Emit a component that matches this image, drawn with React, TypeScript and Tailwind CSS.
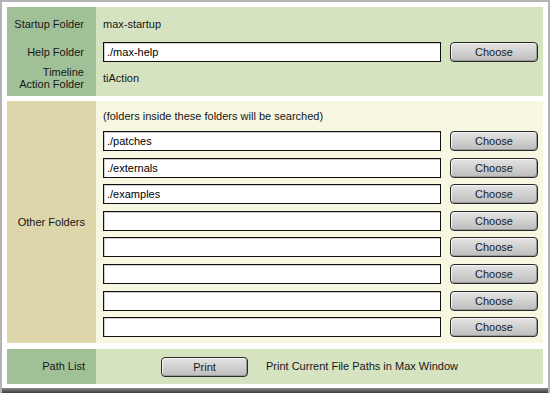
import React from "react"

const font = { fontFamily: '"Liberation Sans", Arial, sans-serif' }

function PathInput({ value = "" }: { value?: string }) {
  return (
    <div className="h-[20px] w-[338px] border border-[#111] bg-white px-[3px] text-[11px] leading-[18px] text-black shadow-[inset_1px_1px_0_#cfcfcf]">
      {value}
    </div>
  )
}

function MacButton({ label, width = "w-[88px]" }: { label: string; width?: string }) {
  return (
    <div
      className={`${width} h-[20px] rounded-[4px] border border-[#2a2a2a] bg-gradient-to-b from-[#e4e4e4] to-[#bdbdbd] text-center text-[11px] leading-[18px] text-[#1a1a1a] shadow-[inset_1px_1px_0_#f4f4f4,inset_-1px_-1px_0_#9a9a9a]`}
    >
      {label}
    </div>
  )
}

function FolderRow({ value }: { value?: string }) {
  return (
    <div className="flex h-[20px] items-center gap-[9px]">
      <PathInput value={value} />
      <MacButton label="Choose" />
    </div>
  )
}

export default function App() {
  const others = ["./patches", "./externals", "./examples", "", "", "", "", ""]

  return (
    <div className="h-[393px] w-[550px] overflow-hidden bg-[#b4b4b4] pl-[2px] pr-[2px] pt-[2px]" style={font}>
      <div className="flex h-[386px] flex-col bg-white px-[5px] pb-[4px] pt-[5px] text-[11px] text-[#161616]">
        {/* startup / help / timeline */}
        <div className="flex h-[89px]">
          <div className="flex w-[89px] flex-col bg-[#a0c197] pb-[6px] pr-[12px] pt-[7px] text-right">
            <div className="flex h-[20px] items-center justify-end">Startup Folder</div>
            <div className="mt-[8px] flex h-[20px] items-center justify-end">Help Folder</div>
            <div className="mt-[4px] flex h-[24px] flex-col justify-center leading-[12px]">
              <span>Timeline</span>
              <span>Action Folder</span>
            </div>
          </div>
          <div className="flex flex-1 flex-col bg-[#d6e3c1] pb-[6px] pl-[7px] pt-[7px]">
            <div className="flex h-[20px] items-center">max-startup</div>
            <div className="mt-[8px]">
              <FolderRow value="./max-help" />
            </div>
            <div className="mt-[4px] flex h-[24px] items-center">tiAction</div>
          </div>
        </div>

        {/* other folders */}
        <div className="mt-[5px] flex h-[242px]">
          <div className="flex w-[89px] items-center justify-end bg-[#ddd6aa] pr-[11px]">Other Folders</div>
          <div className="flex flex-1 flex-col bg-[#f8f7e2] pl-[7px] pt-[7px]">
            <div className="flex h-[16px] items-center">(folders inside these folders will be searched)</div>
            <div className="mt-[7px] flex flex-col gap-[6.6px]">
              {others.map((v, i) => (
                <FolderRow key={i} value={v} />
              ))}
            </div>
          </div>
        </div>

        {/* path list */}
        <div className="mt-[6px] flex h-[35px]">
          <div className="flex w-[89px] items-center justify-end bg-[#a0c197] pr-[11px]">Path List</div>
          <div className="flex flex-1 items-center gap-[18px] bg-[#d6e3c1] pl-[65px]">
            <MacButton label="Print" width="w-[87px]" />
            <span>Print Current File Paths in Max Window</span>
          </div>
        </div>
      </div>
      <div className="h-[5px] bg-gradient-to-b from-[#8a8a8a] to-[#3e3e3e]" />
    </div>
  )
}
